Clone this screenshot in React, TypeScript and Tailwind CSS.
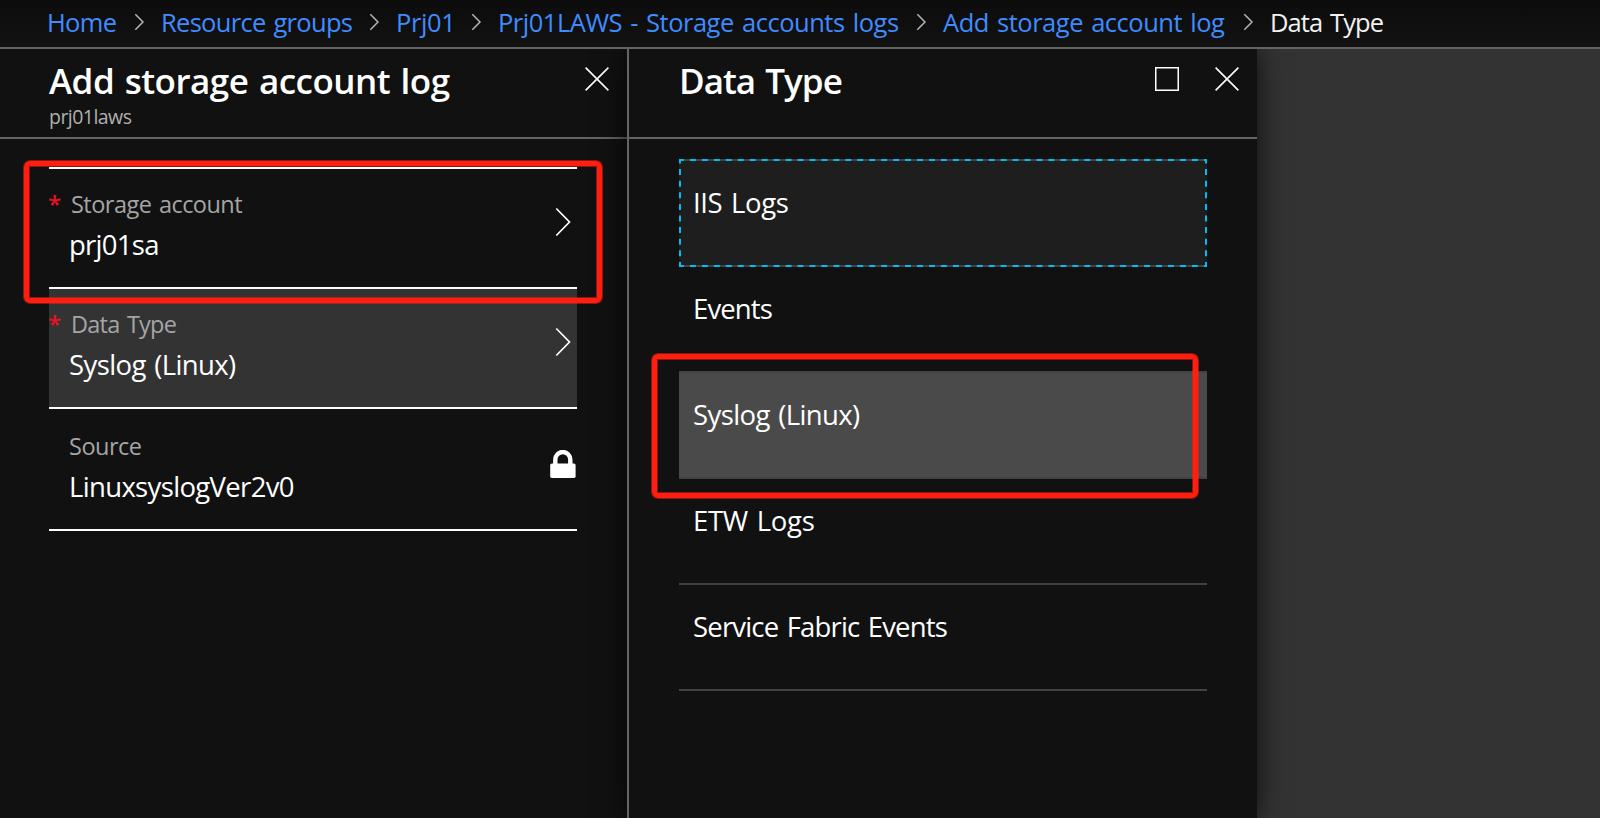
import React from "react";

type Crumb = { label: string; box: string; tracking: string };

const crumbs: Crumb[] = [
  { label: "Home", box: "w-[114px]", tracking: "tracking-[-0.68px]" },
  { label: "Resource groups", box: "w-[235px]", tracking: "tracking-[-0.7px]" },
  { label: "Prj01", box: "w-[102px]", tracking: "tracking-[-0.4px]" },
  { label: "Prj01LAWS - Storage accounts logs", box: "w-[445px]", tracking: "tracking-[-0.48px]" },
  { label: "Add storage account log", box: "w-[327px]", tracking: "tracking-[-0.48px]" },
];

const dataTypes = [
  { label: "IIS Logs", tracking: "tracking-[-0.39px]", state: "focused" },
  { label: "Events", tracking: "tracking-[-0.88px]", state: "plain" },
  { label: "Syslog (Linux)", tracking: "tracking-[-0.61px]", state: "selected" },
  { label: "ETW Logs", tracking: "tracking-[-0.29px]", state: "plain" },
  { label: "Service Fabric Events", tracking: "tracking-[-0.82px]", state: "plain" },
];

const itemStyles: Record<string, string> = {
  focused: "bg-[#1e1e1e]",
  plain: "",
  selected: "bg-[#4a4a4a]",
};

function CrumbChevron() {
  return (
    <svg width="11" height="18" viewBox="0 0 11 18" fill="none" stroke="#b4b4b4" strokeWidth="1.5" className="mt-[9px] shrink-0">
      <path d="M1.3 1.2 9 9 1.3 16.8" />
    </svg>
  );
}

function CloseIcon() {
  return (
    <svg width="24" height="24" viewBox="0 0 24 24" fill="none" stroke="#fff" strokeWidth="1.6">
      <path d="M.6.6 23.4 23.4M23.4.6.6 23.4" />
    </svg>
  );
}

function MaximizeIcon() {
  return (
    <svg width="24" height="24" viewBox="0 0 24 24" fill="none" stroke="#fff" strokeWidth="1.5">
      <path d="M.75.75h22.5v22.5H.75z" />
    </svg>
  );
}

function RowChevron() {
  return (
    <svg width="16" height="30" viewBox="0 0 16 30" fill="none" stroke="#fff" strokeWidth="1.7">
      <path d="M1.3 1.5 14.5 15 1.3 28.5" />
    </svg>
  );
}

function LockIcon() {
  return (
    <svg width="26" height="28" viewBox="0 0 26 28">
      <path d="M5.3 15V9.5a7.5 7.5 0 0 1 15 0V15" fill="none" stroke="#fff" strokeWidth="4.4" />
      <rect x="0.2" y="13.4" width="25.4" height="14.5" rx="1.6" fill="#fff" />
    </svg>
  );
}

function Highlight({ className }: { className: string }) {
  return (
    <div
      className={`pointer-events-none absolute rounded-[6px] border-[5px] border-[#ff1e10] shadow-[0_0_0_1px_rgba(255,30,16,0.5),inset_0_0_0_1px_rgba(255,30,16,0.5)] ${className}`}
    />
  );
}

function Field(props: {
  label: string;
  value: string;
  required?: boolean;
  labelTracking: string;
  valueTracking: string;
  icon: React.ReactNode;
  className: string;
}) {
  return (
    <div className={`flex border-b-2 border-white ${props.className}`}>
      <div className="flex-1">
        <div className="flex h-8 text-[23.5px] leading-8">
          <span className={`${props.required ? "w-[22px]" : "w-5"} shrink-0 -indent-px text-[24px] font-semibold text-[#e81123]`}>
            {props.required ? "*" : ""}
          </span>
          <span className={`text-[#a5a5a5] ${props.labelTracking}`}>{props.label}</span>
        </div>
        <div className={`mt-[7px] h-9 pl-5 text-[27.5px] leading-9 text-white ${props.valueTracking}`}>{props.value}</div>
      </div>
      {props.icon}
    </div>
  );
}

export default function App() {
  return (
    <div className="relative flex h-[818px] w-[1600px] flex-col overflow-hidden bg-[#333] font-['Open_Sans','Noto_Sans',sans-serif] whitespace-nowrap [word-spacing:2px]">
      <header className="flex h-[49px] shrink-0 border-b-2 border-[#646464] bg-linear-to-b from-[#0c0c0c] to-[#121212] pt-[4px] pl-[47px] text-[25.5px] leading-9">
        {crumbs.map((c) => (
          <div key={c.label} className={`flex shrink-0 justify-between pr-[16px] ${c.box}`}>
            <a className={`text-[#3f8cff] ${c.tracking}`}>{c.label}</a>
            <CrumbChevron />
          </div>
        ))}
        <span className="tracking-[-0.9px] text-[#f2f2f2]">Data Type</span>
      </header>

      <main className="flex flex-1 overflow-hidden">
        <section className="flex w-[627px] shrink-0 flex-col bg-[#111]">
          <div className="flex h-[90px] shrink-0 justify-between border-b-2 border-[#646464] pt-[7px] pr-[18px] pl-[49px]">
            <div className="pt-px">
              <h1 className="h-[46px] text-[35px] leading-[48px] font-semibold tracking-[-0.52px] text-white">Add storage account log</h1>
              <p className="text-[19.5px] leading-7 tracking-[-0.54px] text-[#b0b0b0]">prj01laws</p>
            </div>
            <div className="pt-[11px]">
              <CloseIcon />
            </div>
          </div>
          <div className="mt-7 ml-[49px] w-[528px] border-t-2 border-white">
            <Field
              required
              label="Storage account"
              value="prj01sa"
              labelTracking="tracking-[-0.53px]"
              valueTracking="tracking-[-0.72px]"
              className="h-[120px] pt-[19px]"
              icon={<div className="pt-[19px] pr-[6px]"><RowChevron /></div>}
            />
            <Field
              required
              label="Data Type"
              value="Syslog (Linux)"
              labelTracking="tracking-[-0.75px]"
              valueTracking="tracking-[-0.61px]"
              className="h-[120px] bg-[#333] pt-[19px]"
              icon={<div className="pt-[19px] pr-[6px]"><RowChevron /></div>}
            />
            <Field
              label="Source"
              value="LinuxsyslogVer2v0"
              labelTracking="tracking-[-0.5px]"
              valueTracking="tracking-[-0.66px]"
              className="h-[122px] pt-[21px]"
              icon={<div className="pt-[20px] pr-[1px]"><LockIcon /></div>}
            />
          </div>
        </section>

        <section className="flex w-[630px] shrink-0 flex-col border-l-2 border-[#646464] bg-[#111] shadow-[0_0_26px_rgba(0,0,0,0.75)]">
          <div className="flex h-[90px] shrink-0 justify-between border-b-2 border-[#646464] pt-[7px] pr-[18px] pl-[50px]">
            <h2 className="pt-px text-[35px] leading-[48px] font-semibold tracking-[-0.98px] text-white">Data Type</h2>
            <div className="flex gap-9 pt-[11px]">
              <MaximizeIcon />
              <CloseIcon />
            </div>
          </div>
          <ul className="mt-[22px] ml-[50px] w-[528px]">
            {dataTypes.map((d) => (
              <li
                key={d.label}
                className={`relative h-[106px] border-b-2 border-[#424242] pt-6 pl-[14px] text-[27.5px] leading-9 text-white ${itemStyles[d.state]} ${d.tracking}`}
              >
                {d.label}
                {d.state === "focused" && (
                  <svg className="absolute -top-[2px] left-0" width="528" height="108" fill="none">
                    <path d="M0 1H528" stroke="#424242" strokeWidth="2" />
                    <path d="M1 1H527M1 107H527" stroke="#00bcf2" strokeWidth="2" strokeDasharray="6 5.95" strokeDashoffset="2" />
                    <path d="M1 0V108M527 0V108" stroke="#00bcf2" strokeWidth="2" strokeDasharray="6 5.6" strokeDashoffset="1.5" />
                  </svg>
                )}
              </li>
            ))}
          </ul>
        </section>
      </main>

      <Highlight className="top-[161px] left-[24px] h-[142px] w-[578px]" />
      <Highlight className="top-[354px] left-[652px] h-[144px] w-[546px]" />
    </div>
  );
}
